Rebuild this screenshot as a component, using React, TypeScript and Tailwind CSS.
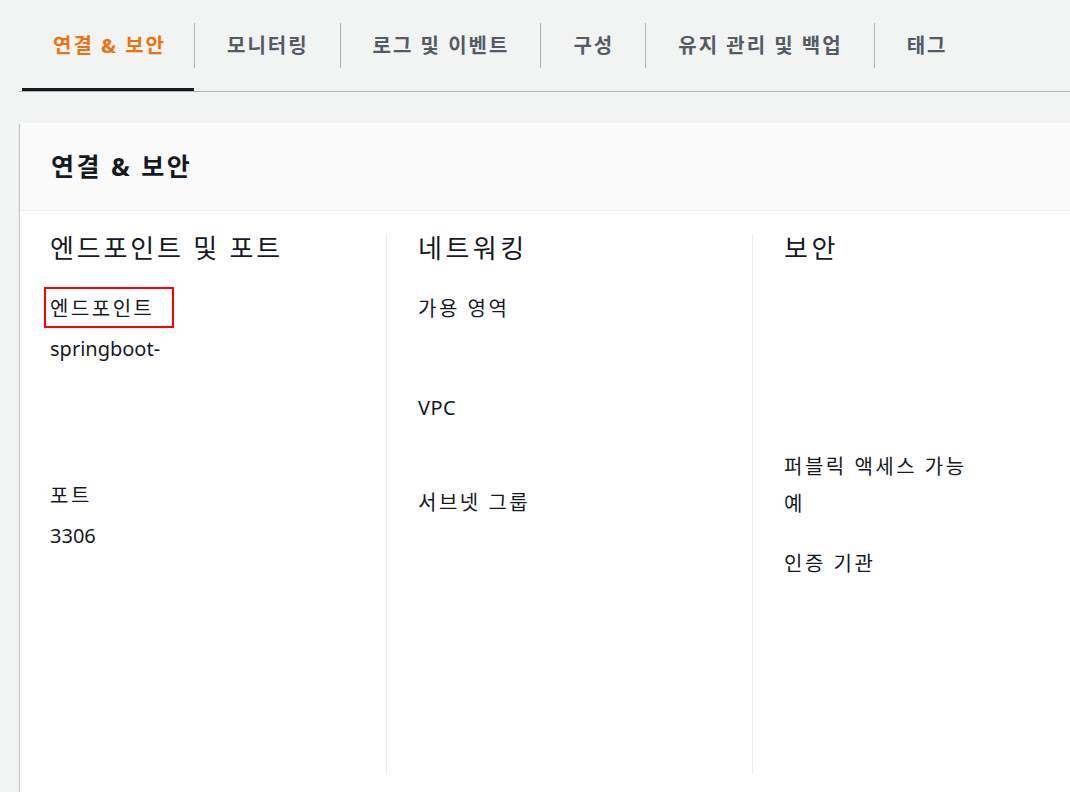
const tabs = ['연결 & 보안', '모니터링', '로그 및 이벤트', '구성', '유지 관리 및 백업', '태그'];

const font = { fontFamily: '"Noto Sans", "Noto Sans CJK KR", sans-serif' };

function Field({ label, value, className = '', boxed = false }: { label: string; value?: string; className?: string; boxed?: boolean }) {
  return (
    <div className={className}>
      <div className="relative inline-block text-[20px] leading-[30px] tracking-[2.5px] text-[#16191f]">
        {label}
        {boxed && <span className="absolute -left-[6px] -top-[7px] h-[41px] w-[130px] border-2 border-[#ff0000]" />}
      </div>
      {value && <div className="mt-[10px] text-[20px] leading-[30px] text-[#16191f]">{value}</div>}
    </div>
  );
}

export default function App() {
  return (
    <div className="h-[792px] w-[1070px] overflow-hidden bg-[#f2f3f3]" style={font}>
      <div className="ml-[19px] border-b border-[#aab7b8]">
        <div className="ml-[3px] flex items-center">
          {tabs.map((t, i) => (
            <div key={t} className="flex items-center">
              {i > 0 && <div className="h-[45px] w-px bg-[#aab7b8]" />}
              <div
                className={
                  'flex h-[91px] items-center border-b-[3px] pt-[3px] text-[20px] font-bold tracking-[2px] ' +
                  (i === 0
                    ? 'border-[#16191f] pl-[31px] pr-[28px] text-[#ec7211]'
                    : 'border-transparent pl-[32px] pr-[31px] text-[#545b64]')
                }
              >
                {t}
              </div>
            </div>
          ))}
        </div>
      </div>

      <div className="ml-[20px] mt-[31px] w-[1080px] bg-white shadow-[0_1px_1px_0_rgba(0,28,36,0.3),1px_1px_1px_0_rgba(0,28,36,0.15),-1px_1px_1px_0_rgba(0,28,36,0.15)]">
        <div className="flex h-[88px] items-center border-b border-[#eaeded] bg-[#fafafa] px-[31px]">
          <h2 className="text-[25px] font-bold tracking-[2.5px] text-[#16191f]">연결 &amp; 보안</h2>
        </div>
        <div className="flex px-[30px] pb-[40px] pt-[23px]">
          <div className="h-[540px] w-[336px] pr-[32px]">
            <h3 className="text-[26px] leading-[28px] tracking-[2.8px] text-[#16191f]">엔드포인트 및 포트</h3>
            <Field className="mt-[32px]" label="엔드포인트" value="springboot-" boxed />
            <Field className="mt-[117px]" label="포트" value="3306" />
          </div>
          <div className="h-[540px] w-[366px] border-l border-[#eaeded] pl-[31px] pr-[32px]">
            <h3 className="text-[26px] leading-[28px] tracking-[3.5px] text-[#16191f]">네트워킹</h3>
            <Field className="mt-[32px]" label="가용 영역" />
            <div className="mt-[69px] text-[20px] leading-[30px] tracking-[0.5px] text-[#16191f]">VPC</div>
            <Field className="mt-[65px]" label="서브넷 그룹" />
          </div>
          <div className="h-[540px] flex-1 border-l border-[#eaeded] pl-[31px]">
            <h3 className="text-[26px] leading-[28px] tracking-[3.5px] text-[#16191f]">보안</h3>
            <div className="mt-[190px] text-[20px] leading-[30px] tracking-[2.5px] text-[#16191f]">퍼블릭 액세스 가능</div>
            <div className="mt-[7px] text-[20px] leading-[30px] text-[#16191f]">예</div>
            <div className="mt-[30px] text-[20px] leading-[30px] tracking-[2.5px] text-[#16191f]">인증 기관</div>
          </div>
        </div>
      </div>
    </div>
  );
}
